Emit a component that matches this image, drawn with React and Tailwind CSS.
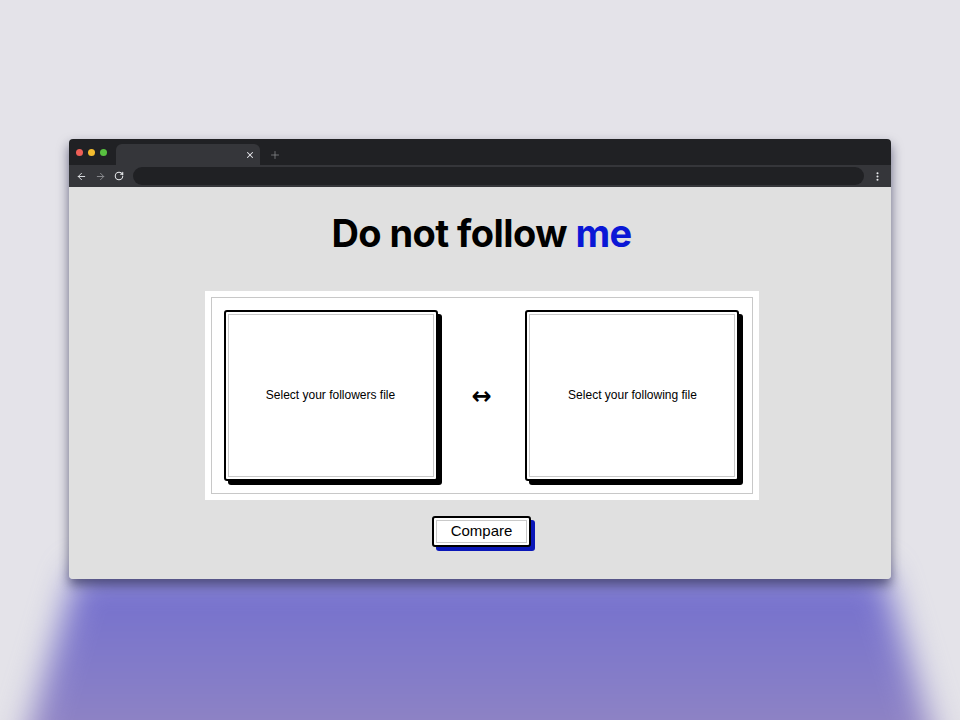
import { ArrowLeft, ArrowRight, RotateCw, X, Plus, EllipsisVertical } from 'lucide-react'

function FilePicker({ label }) {
  return (
    <div className="w-[214px] h-[171px] bg-white border-2 border-black rounded-[3px] shadow-[4px_4px_0_#000] p-[2px]">
      <div className="w-full h-full border border-[#c9c9c9] flex items-center justify-center pb-[2px] text-[12px] text-black font-['Liberation_Sans',Arial,sans-serif]">
        {label}
      </div>
    </div>
  )
}

export default function App() {
  return (
    <div className="relative w-[960px] h-[720px] overflow-hidden bg-[#e4e3e9]">
      {/* purple glow under the window */}
      <div className="absolute left-0 top-[572px] w-[960px] h-[220px] blur-[16px]">
        <div className="w-full h-full bg-gradient-to-b from-[#736fcf] via-[#857dc8] to-[#9d8cbe] [clip-path:polygon(8%_0,92%_0,99%_100%,1%_100%)]" />
      </div>

      <div className="relative pt-[139px] pl-[69px] flex">
        <div className="relative w-[822px] h-[440px] rounded-[4px] overflow-hidden flex flex-col shadow-[0_6px_12px_rgba(20,20,60,0.6)]">
          {/* tab strip */}
          <div className="h-[26px] bg-[#202124] flex items-end">
            <div className="flex items-center gap-[5px] pl-[7px] h-full">
              <span className="w-[7px] h-[7px] rounded-full bg-[#ee5f57]" />
              <span className="w-[7px] h-[7px] rounded-full bg-[#f3bc2f]" />
              <span className="w-[7px] h-[7px] rounded-full bg-[#58c140]" />
            </div>
            <div className="ml-[9px] w-[144px] h-[21px] bg-[#35363a] rounded-t-[6px] flex items-center justify-end pr-[5px]">
              <X size={10} strokeWidth={2.5} className="text-[#e8eaed]" />
            </div>
            <div className="h-[21px] flex items-center ml-[9px]">
              <Plus size={12} strokeWidth={1.5} className="text-[#8a8b8f]" />
            </div>
          </div>

          {/* toolbar */}
          <div className="h-[22px] bg-[#35363a] flex items-center">
            <div className="flex items-center gap-[8px] pl-[7px] pr-[9px]">
              <ArrowLeft size={11} strokeWidth={2} className="text-[#e8eaed]" />
              <ArrowRight size={11} strokeWidth={2} className="text-[#8f9094]" />
              <RotateCw size={10} strokeWidth={2.5} className="text-[#e8eaed]" />
            </div>
            <div className="flex-1 h-[18px] bg-[#202124] rounded-full" />
            <div className="w-[27px] flex justify-center">
              <EllipsisVertical size={11} strokeWidth={2.5} className="text-[#e8eaed]" />
            </div>
          </div>

          {/* page */}
          <div className="flex-1 bg-[#e0e0e0] flex flex-col items-center pt-[23px] pl-[3px]">
            <h1 className="text-[38px] leading-[46px] font-bold tracking-[-0.015em] text-black font-['Inter',sans-serif]">
              Do not follow <span className="text-[#0a17d6]">me</span>
            </h1>

            <div className="mt-[35px] w-[554px] bg-white p-[6px]">
              <div className="border border-[#c8c8c8] pl-[12px] pr-[12px] py-[12px] flex items-center justify-between">
                <FilePicker label="Select your followers file" />
                <span className="text-[24px] leading-none text-black font-['DejaVu_Sans',sans-serif] font-bold">↔</span>
                <FilePicker label="Select your following file" />
              </div>
            </div>

            <button className="mt-[16px] w-[99px] h-[31px] bg-white border-2 border-black rounded-[3px] shadow-[4px_4px_0_#0a17b8] p-[2px]">
              <div className="w-full h-full border border-[#c9c9c9] flex items-center justify-center text-[15px] text-black font-['Liberation_Sans',Arial,sans-serif]">
                Compare
              </div>
            </button>
          </div>
        </div>
      </div>
    </div>
  )
}
